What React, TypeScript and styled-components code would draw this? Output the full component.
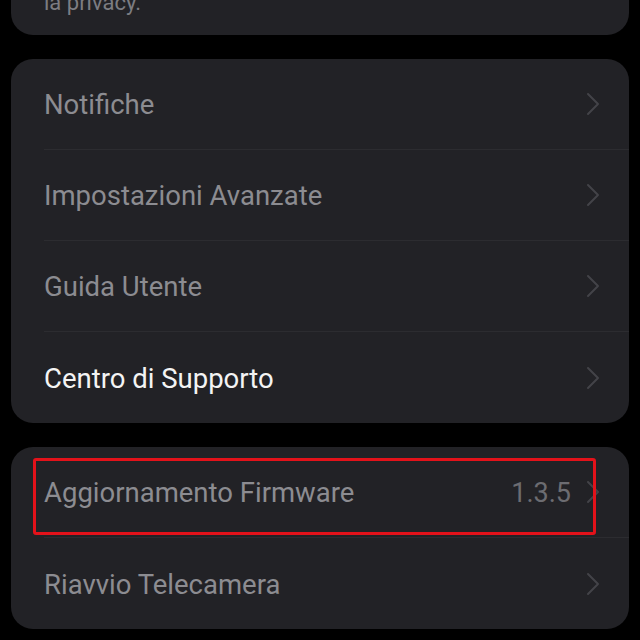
import React from "react";
import styled, { createGlobalStyle } from "styled-components";

const GlobalStyle = createGlobalStyle`
  html, body {
    margin: 0;
    padding: 0;
    background: #000;
    overflow: hidden;
  }
  body {
    font-family: Roboto, "Noto Sans", "Liberation Sans", sans-serif;
  }
`;

const Page = styled.div`
  width: 640px;
  height: 640px;
  background: #000;
  display: flex;
  flex-direction: column;
  gap: 23.5px;
  padding: 0 11px;
  box-sizing: border-box;
  overflow: hidden;
`;

const Card = styled.div`
  position: relative;
  background: #222226;
  border-radius: 22px;
  overflow: hidden;
  flex-shrink: 0;
`;

const TopCard = styled(Card)`
  margin-top: -59px;
  padding: 20px 33px 18px;
  font-size: 22px;
  line-height: 28px;
  color: #7d7d82;
`;

const Row = styled.div<{ $last?: boolean }>`
  height: 91.2px;
  margin-left: 33px;
  padding-right: 29px;
  display: flex;
  align-items: center;
  border-bottom: ${(p) => (p.$last ? "none" : "1px solid #2c2c30")};
  box-sizing: border-box;
`;

const Label = styled.span<{ $bright?: boolean }>`
  flex: 1;
  font-size: 27.5px;
  padding-top: 2px;
  color: ${(p) => (p.$bright ? "#f4f4f4" : "#8c8c91")};
`;

const Value = styled.span`
  font-size: 27px;
  padding-top: 2px;
  color: #6c6c71;
  margin-right: 15px;
`;

const Highlight = styled.div`
  position: absolute;
  left: 22px;
  top: 11px;
  width: 563px;
  height: 77px;
  border: 3px solid #e3121a;
  border-radius: 3px;
  box-sizing: border-box;
  pointer-events: none;
`;

const Chevron = () => (
  <svg width="14" height="24" viewBox="0 0 14 24" fill="none">
    <path
      d="M2 2 L12 12 L2 22"
      stroke="#434348"
      strokeWidth="2"
      strokeLinecap="round"
      strokeLinejoin="round"
    />
  </svg>
);

type Item = { label: string; bright?: boolean; value?: string };

const settings: Item[] = [
  { label: "Notifiche" },
  { label: "Impostazioni Avanzate" },
  { label: "Guida Utente" },
  { label: "Centro di Supporto", bright: true },
];

const device: Item[] = [
  { label: "Aggiornamento Firmware", value: "1.3.5" },
  { label: "Riavvio Telecamera" },
];

function Rows({ items }: { items: Item[] }) {
  return (
    <>
      {items.map((item, i) => (
        <Row key={item.label} $last={i === items.length - 1}>
          <Label $bright={item.bright}>{item.label}</Label>
          {item.value && <Value>{item.value}</Value>}
          <Chevron />
        </Row>
      ))}
    </>
  );
}

export default function App() {
  return (
    <>
      <GlobalStyle />
      <Page>
        <TopCard>
          dati personali e proteggere
          <br />
          la privacy.
        </TopCard>
        <Card>
          <Rows items={settings} />
        </Card>
        <Card>
          <Rows items={device} />
          <Highlight />
        </Card>
      </Page>
    </>
  );
}
